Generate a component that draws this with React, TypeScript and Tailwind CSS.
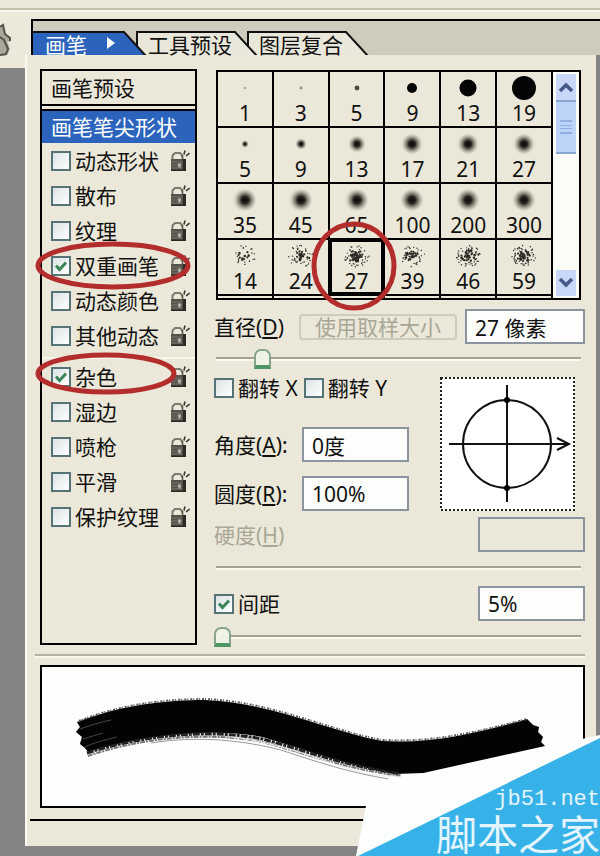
import React from "react";

type BrushKind = "hard" | "soft" | "spatter";
type Brush = { size: number; kind: BrushKind; r: number };

const brushes: Brush[] = [
  { size: 1, kind: "hard", r: 1 },
  { size: 3, kind: "hard", r: 1.4 },
  { size: 5, kind: "hard", r: 2.4 },
  { size: 9, kind: "hard", r: 5 },
  { size: 13, kind: "hard", r: 8.5 },
  { size: 19, kind: "hard", r: 12 },
  { size: 5, kind: "soft", r: 2 },
  { size: 9, kind: "soft", r: 4 },
  { size: 13, kind: "soft", r: 7 },
  { size: 17, kind: "soft", r: 9 },
  { size: 21, kind: "soft", r: 9 },
  { size: 27, kind: "soft", r: 9 },
  { size: 35, kind: "soft", r: 10 },
  { size: 45, kind: "soft", r: 10 },
  { size: 65, kind: "soft", r: 10 },
  { size: 100, kind: "soft", r: 10 },
  { size: 200, kind: "soft", r: 10 },
  { size: 300, kind: "soft", r: 10 },
  { size: 14, kind: "spatter", r: 34 },
  { size: 24, kind: "spatter", r: 64 },
  { size: 27, kind: "spatter", r: 90 },
  { size: 39, kind: "spatter", r: 58 },
  { size: 46, kind: "spatter", r: 84 },
  { size: 59, kind: "spatter", r: 90 },
];

const dynamics = ["动态形状", "散布", "纹理", "双重画笔", "动态颜色", "其他动态"];
const extras = ["杂色", "湿边", "喷枪", "平滑", "保护纹理"];

function spatter(count: number, seed: number) {
  let s = seed * 7919 + 13;
  const next = () => {
    s = (s * 1103515245 + 12345) % 2147483648;
    return s / 2147483648;
  };
  return Array.from({ length: count }, () => {
    const angle = next() * Math.PI * 2;
    const dist = Math.pow(next(), 0.8) * 13;
    return {
      x: 14 + Math.cos(angle) * dist,
      y: 13 + Math.sin(angle) * dist * 0.85,
      r: dist < 7 ? 1.1 : 0.7,
    };
  });
}

function BrushTip({ brush }: { brush: Brush }) {
  return (
    <svg viewBox="0 0 28 26" className="h-[26px] w-7" aria-hidden="true">
      <defs>
        <radialGradient id="softTip">
          <stop offset="0" stopColor="#080806" />
          <stop offset="0.3" stopColor="#26261f" />
          <stop offset="0.65" stopColor="#77756a" stopOpacity="0.6" />
          <stop offset="1" stopColor="#c4c1b2" stopOpacity="0" />
        </radialGradient>
      </defs>
      {brush.kind === "hard" && (
        <circle cx="14" cy="13" r={brush.r} fill={brush.r < 2 ? "#8b897e" : brush.r < 3 ? "#4b4a42" : "#050505"} />
      )}
      {brush.kind === "soft" && <circle cx="14" cy="13" r={brush.r + 2} fill="url(#softTip)" />}
      {brush.kind === "spatter" &&
        spatter(brush.r, brush.size).map((d, i) => <circle key={i} cx={d.x} cy={d.y} r={d.r} fill="#2c2b26" />)}
    </svg>
  );
}

function Lock() {
  return (
    <svg viewBox="0 0 20 22" className="h-[22px] w-5 flex-none" aria-hidden="true">
      <path d="M2.500 11V5.500L5 3h5l2 2v1.500" fill="none" stroke="#7d7b70" strokeWidth="2" />
      <path d="M14 4.500l1-4M16 6l3.500-3" stroke="#3a3933" strokeWidth="1.600" />
      <path d="M12.500 5v4" stroke="#55534b" strokeWidth="1.600" />
      <rect x="1" y="9" width="15" height="12" fill="#55534b" />
      <path d="M1 12h11M1 15h11M1 18h11" stroke="#77746a" strokeWidth="1.200" />
      <path d="M13 9h3v12h-3zM1 19.500h15v1.500H1z" fill="#2a2925" />
      <path d="M8 13.500h3l-.500 4h-2z" fill="#bdbaae" />
    </svg>
  );
}

function Tick({ checked, label }: { checked?: boolean; label: string }) {
  return (
    <label className="flex items-center gap-1 whitespace-nowrap">
      <span className="grid size-5 flex-none place-items-center">
        <input
          type="checkbox"
          defaultChecked={checked}
          className="peer col-start-1 row-start-1 size-5 appearance-none border-2 border-[#567378] bg-linear-to-br from-[#dbe4e4] to-white"
        />
        <svg
          viewBox="0 0 12 12"
          className="pointer-events-none invisible col-start-1 row-start-1 size-3 peer-checked:visible"
          aria-hidden="true"
        >
          <path d="M1 5.500L4.500 9.500 11 2.500" fill="none" stroke="#3c8658" strokeWidth="3" />
        </svg>
      </span>
      {label}
    </label>
  );
}

function Ring({ className }: { className: string }) {
  return (
    <svg viewBox="0 0 100 100" preserveAspectRatio="none" className={`pointer-events-none absolute z-10 overflow-visible ${className}`} aria-hidden="true">
      <ellipse cx="50" cy="50" rx="50" ry="50" fill="none" stroke="#b32d2c" strokeWidth="5" vectorEffect="non-scaling-stroke" />
    </svg>
  );
}

function Tab({ label, active, className }: { label: string; active?: boolean; className: string }) {
  return (
    <button type="button" role="tab" aria-selected={!!active} className={`relative flex h-6 flex-none items-end gap-5 ${className}`}>
      <svg viewBox="0 0 122 24" preserveAspectRatio="xMaxYMin slice" className="absolute inset-0 h-6 w-full" aria-hidden="true">
        <path d="M1 26V1H99L121 25" fill={active ? "#2c64bd" : "#e9e7d9"} stroke="#111" strokeWidth="2" />
      </svg>
      <span className="relative leading-5">{label}</span>
      {active && (
        <svg viewBox="0 0 8 12" className="relative mb-1.5 h-3 w-2" aria-hidden="true">
          <path d="M0 0l8 6-8 6z" fill="#fff" />
        </svg>
      )}
    </button>
  );
}

function Slider({ label, value, disabled }: { label: string; value: number; disabled?: boolean }) {
  return (
    <input
      type="range"
      aria-label={label}
      defaultValue={value}
      disabled={disabled}
      className="mr-1 block h-5 appearance-none bg-transparent [&::-webkit-slider-runnable-track]:h-[4px] [&::-webkit-slider-runnable-track]:border-t-2 [&::-webkit-slider-runnable-track]:border-b-2 [&::-webkit-slider-runnable-track]:border-t-[#a5a28f] [&::-webkit-slider-runnable-track]:border-b-[#faf9ee] [&::-webkit-slider-thumb]:-mt-[10px] [&::-webkit-slider-thumb]:h-5 [&::-webkit-slider-thumb]:w-[17px] [&::-webkit-slider-thumb]:appearance-none [&::-webkit-slider-thumb]:rounded-t-[7px] [&::-webkit-slider-thumb]:border-2 [&::-webkit-slider-thumb]:border-b-4 [&::-webkit-slider-thumb]:border-[#87a58a] [&::-webkit-slider-thumb]:border-b-[#4d9562] [&::-webkit-slider-thumb]:bg-[#eef3e6] disabled:[&::-webkit-slider-thumb]:invisible"
    />
  );
}

const field = "h-[35px] border-2 border-[#8b95a0] bg-[#fdfdfc] pl-2 text-[#111] disabled:bg-[#ebe9da]";

function Arrow({ down }: { down?: boolean }) {
  return (
    <button type="button" aria-label={down ? "向下" : "向上"} className="grid h-[26px] w-full place-items-center bg-[#c9d7f8]">
      <svg viewBox="0 0 16 10" className={`h-[10px] w-4 ${down ? "rotate-180" : ""}`} aria-hidden="true">
        <path d="M2 9l6-6 6 6" fill="none" stroke="#465b88" strokeWidth="3.500" />
      </svg>
    </button>
  );
}

function StrokePreview() {
  return (
    <svg viewBox="0 0 542 139" className="h-[139px] w-full" role="img" aria-label="画笔预览">
      <g transform="translate(-41 -668)" fill="none">
        <path
          d="M76 723C120 706 165 701 204 701C270 703 330 733 382 742C435 745 480 733 527 720L533 726 539 728 538 733 543 738 541 743 545 747L423 774 395 775C350 768 300 749 262 738C210 728 140 737 87 753L84 749 79 745 81 738 75 733 79 728Z"
          fill="#030303"
        />
        <path d="M78 722C120 705 165 700 204 700C270 702 330 732 382 741C435 744 480 732 527 720" stroke="#555" strokeWidth="2" strokeDasharray="2 1 1 2" />
        <path d="M86 754C140 737 205 729 262 740C300 750 340 766 400 775" stroke="#222" strokeWidth="3" strokeDasharray="7 1 3 1" />
        <path d="M87 757C140 739 205 732 262 743C300 753 340 769 400 777" stroke="#777" strokeWidth="2" strokeDasharray="5 1 2 1" />
        <path d="M230 738C262 741 300 753 340 767S380 775 400 778" stroke="#e8e8e8" strokeWidth="1" />
        <path d="M150 744C200 736 245 742 280 751C320 764 350 774 388 780" stroke="#999" strokeWidth="1" />
        <path d="M84 748C92 744 104 741 116 738M79 730C90 726 100 723 110 721M82 740L102 734" stroke="#444" strokeWidth="1" />
      </g>
    </svg>
  );
}

export default function App() {
  return (
    <div className="relative flex min-h-screen flex-col overflow-hidden bg-[#848484] font-['Noto_Sans','Noto_Sans_CJK_SC',sans-serif] text-[21px] leading-6 text-[#111]">
      <div className="h-[19px] bg-[#ece9da] pt-2">
        <div className="h-1 border-t-2 border-b-2 border-t-[#c3c0aa] border-b-[#f9f8ef]" />
      </div>

      <div className="flex">
        <aside className="w-[25px] flex-none">
          <div className="h-[49px] bg-[#ece9da] pt-1">
            <svg viewBox="0 0 13 34" className="h-[34px] w-[13px]" aria-hidden="true">
              <path d="M0 5l3-3 2 9 5 5v3l-3-1 3 8-3 6-7 1z" fill="#aaa89c" />
              <path d="M0 4l3-2 2 9 5 4v3M0 14l4 3 4 9-2 5-6 1" fill="none" stroke="#55534b" strokeWidth="2" />
            </svg>
          </div>
        </aside>

        <main className="min-w-0 flex-1">
          <div className="bg-[#ece9da] pl-1.5">
            <div role="tablist" className="flex h-9 items-end border-t-2 border-l-2 border-black bg-[#cfccbe]">
              <Tab label="画笔" active className="z-20 w-[114px] pl-3 text-white" />
              <Tab label="工具预设" className="z-10 -ml-[11px] w-[122px] pl-3" />
              <Tab label="图层复合" className="-ml-[11px] w-[122px] pl-3" />
            </div>
          </div>

          <div className="mr-1 border-l-2 border-[#faf9f0] bg-[#ebe8d9]">
            <div className="flex gap-[17px] pt-[14px] pr-[11px] pl-[13px]">
              <nav className="mb-0.5 w-[157px] flex-none border-2 border-black">
                <button type="button" className="block h-[35px] w-full border-b-2 border-black pl-[9px] text-left">
                  画笔预设
                </button>
                <button type="button" className="mt-[3px] block h-[34px] w-full border-t-2 border-black bg-[#2c64bd] pl-[9px] text-left whitespace-nowrap text-white">
                  画笔笔尖形状
                </button>
                <ul>
                  {dynamics.map((name) => (
                    <li key={name} className="relative flex h-[35px] items-center justify-between pr-[5px] pl-[9px]">
                      <Tick label={name} checked={name === "双重画笔"} />
                      <Lock />
                      {name === "双重画笔" && <Ring className="-top-1 -left-1 h-[43px] w-[150px]" />}
                    </li>
                  ))}
                </ul>
                <div className="mt-1 border-t-2 border-[#f8f6ea]" />
                <ul>
                  {extras.map((name) => (
                    <li key={name} className="relative flex h-[35px] items-center justify-between pr-[5px] pl-[9px]">
                      <Tick label={name} checked={name === "杂色"} />
                      <Lock />
                      {name === "杂色" && <Ring className="-top-1 -left-1 h-[37px] w-[136px]" />}
                    </li>
                  ))}
                </ul>
              </nav>

              <section className="flex min-w-0 flex-1 flex-col">
                <div className="mt-px mr-1 ml-0.5 flex h-[230px] border-2 border-black">
                  <div className="grid flex-1 grid-cols-6 grid-rows-[56px_56px_56px_56px_1fr]">
                    {brushes.map((b, i) => (
                      <button key={i} type="button" className="relative flex flex-col items-center border-r-2 border-b-2 border-black pt-[3px]">
                        <BrushTip brush={b} />
                        {b.size}
                        {i === 20 && (
                          <>
                            <span className="absolute -top-0.5 -right-0.5 -bottom-0.5 -left-0.5 border-4 border-black" />
                            <Ring className="-top-4 -left-4 h-[84px] w-[80px]" />
                          </>
                        )}
                      </button>
                    ))}
                    {brushes.slice(0, 6).map((b) => (
                      <span key={b.size} className="border-r-2 border-black" />
                    ))}
                  </div>
                  <div className="flex w-[26px] flex-none flex-col bg-[#fbfbf8] px-[3px] pt-0.5 pb-0.5">
                    <Arrow />
                    <div className="grid h-[54px] place-items-center border-y-2 border-[#88a8d4] bg-[#bcd4f8]">
                      <span className="h-[14px] w-3 border-y-2 border-[#91afe0] py-[3px]">
                        <span className="block h-1 border-y border-[#91afe0]" />
                      </span>
                    </div>
                    <div className="mt-auto">
                      <Arrow down />
                    </div>
                  </div>
                </div>

                <div className="mt-[9px] flex items-center">
                  <label htmlFor="diameter" className="w-[85px] flex-none whitespace-nowrap">
                    直径(<u className="underline-offset-2">D</u>)
                  </label>
                  <button type="button" disabled className="h-[26px] min-w-0 flex-1 rounded-sm border-2 border-[#cfccba] text-center leading-5 whitespace-nowrap text-[#a9a696]">
                    使用取样大小
                  </button>
                  <input id="diameter" defaultValue="27 像素" className={`ml-2 w-[120px] ${field}`} />
                </div>
                <div className="mt-[5px] ml-0.5 grid">
                  <Slider label="直径" value={11} />
                </div>

                <div className="mt-2 flex justify-between pr-[10px]">
                  <div>
                    <div className="mt-px flex h-5 gap-1.5">
                      <Tick label="翻转 X" />
                      <Tick label="翻转 Y" />
                    </div>
                    <div className="mt-[29px] flex items-center">
                      <label htmlFor="angle" className="w-[88px] whitespace-nowrap">
                        角度(<u className="underline-offset-2">A</u>):
                      </label>
                      <input id="angle" defaultValue="0度" className={`w-[107px] ${field}`} />
                    </div>
                    <div className="mt-[14px] flex items-center">
                      <label htmlFor="roundness" className="w-[88px] whitespace-nowrap">
                        圆度(<u className="underline-offset-2">R</u>):
                      </label>
                      <input id="roundness" defaultValue="100%" className={`w-[107px] ${field}`} />
                    </div>
                  </div>
                  <svg viewBox="0 0 135 134" className="h-[134px] w-[135px] bg-white" role="img" aria-label="角度和圆度">
                    <rect x="1" y="1" width="133" height="132" fill="none" stroke="#222" strokeWidth="2" strokeDasharray="2 2" />
                    <g fill="none" stroke="#111" strokeWidth="2">
                      <circle cx="67" cy="67" r="44" />
                      <path d="M67 8V125M9 67H128M117 61l12 6-12 6" />
                    </g>
                    <circle cx="67" cy="23" r="3" />
                    <circle cx="67" cy="111" r="3" />
                  </svg>
                </div>

                <div className="mt-1.5 flex items-center justify-between">
                  <label htmlFor="hardness" className="text-[#aaa797]">
                    硬度(<u className="underline-offset-2">H</u>)
                  </label>
                  <input id="hardness" disabled className={`w-[107px] ${field}`} />
                </div>
                <div className="mt-1.5 ml-0.5 grid">
                  <Slider label="硬度" value={0} disabled />
                </div>

                <div className="mt-2 flex items-center justify-between">
                  <Tick label="间距" checked />
                  <input aria-label="间距" defaultValue="5%" className={`w-[107px] ${field}`} />
                </div>
                <div className="mt-1.5 grid">
                  <Slider label="间距" value={0} />
                </div>
              </section>
            </div>

            <div className="mt-[7px] mr-[11px] ml-2 h-1 border-t-2 border-b-2 border-t-[#b5b29e] border-b-[#f9f8ef]" />
            <div className="mt-[7px] mr-[11px] ml-[13px] h-[143px] border-2 border-black bg-[#fefefe]">
              <StrokePreview />
            </div>
            <div className="mt-[11px] ml-[3px] border-t-2 border-black" />
            <div className="h-[25px]" />
          </div>
        </main>
      </div>

      <div className="pointer-events-none absolute right-0 bottom-0 flex h-[121px] w-[244px] flex-col items-end justify-end text-[#e3f4fd]">
        <svg viewBox="0 0 244 121" className="absolute inset-0 h-full w-full" aria-hidden="true">
          <path d="M0 121L11 66 34 47 244 0V121Z" fill="#fdfefe" />
          <path d="M2 121L244 3V121Z" fill="#37b2e9" />
        </svg>
        <span className="relative font-['Liberation_Mono',monospace] text-[22px] leading-6">jb51.net</span>
        <span className="relative text-[41px] leading-[44px]">脚本之家</span>
      </div>
    </div>
  );
}
